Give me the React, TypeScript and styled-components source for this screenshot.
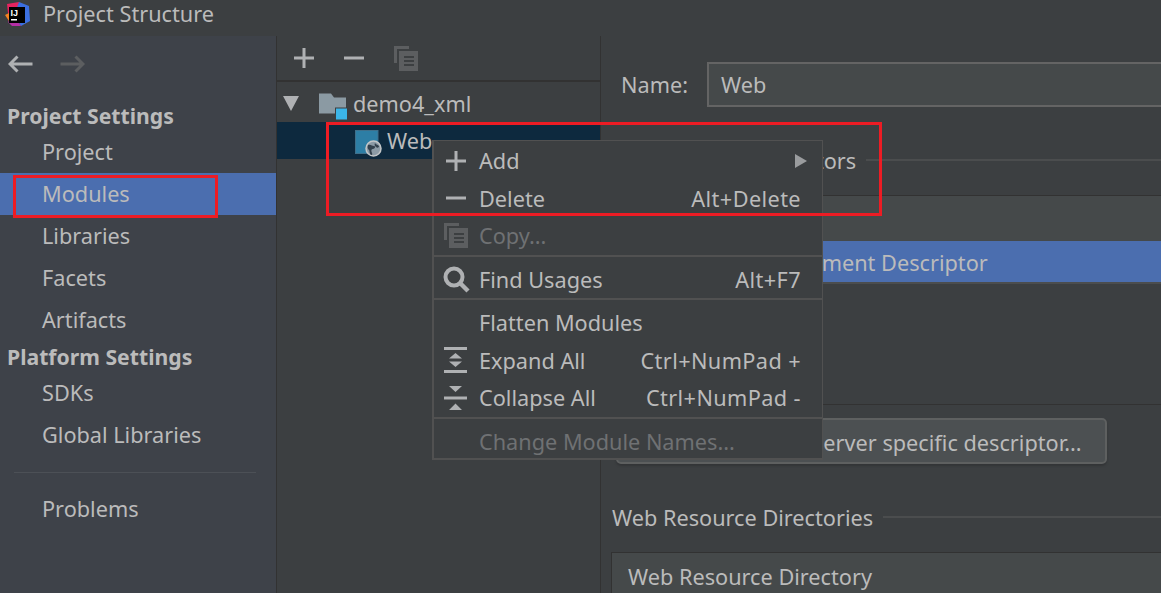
import React from 'react';
import styled, { createGlobalStyle } from 'styled-components';

const GlobalStyle = createGlobalStyle`
  html, body {
    margin: 0;
    padding: 0;
    background: #3c3f41;
    overflow: hidden;
  }
`;

const Root = styled.div`
  position: relative;
  width: 1161px;
  height: 593px;
  overflow: hidden;
  display: flex;
  flex-direction: column;
  background: #3c3f41;
  color: #bbbbbb;
  font-family: 'Noto Sans', 'Open Sans', sans-serif;
  font-size: 21.7px;
`;

const TitleBar = styled.div`
  height: 36px;
  flex: none;
  box-sizing: border-box;
  display: flex;
  align-items: center;
  gap: 13px;
  padding: 0 0 9px 5px;
  background: #3c3f41;
`;

const Body = styled.div`
  flex: 1;
  display: flex;
  min-height: 0;
`;

const Sidebar = styled.div`
  width: 276px;
  flex: none;
  background: #3e4249;
  border-right: 1px solid #323232;
  display: flex;
  flex-direction: column;
`;

const NavBar = styled.div`
  height: 59px;
  flex: none;
  box-sizing: border-box;
  display: flex;
  align-items: center;
  gap: 27px;
  padding: 0 0 3px 8px;
`;

const SideHeading = styled.div<{ $height: number; $pad?: number }>`
  height: ${p => p.$height}px;
  flex: none;
  box-sizing: border-box;
  display: flex;
  align-items: center;
  padding: ${p => p.$pad ?? 0}px 0 0 7px;
  font-size: 21.2px;
  font-weight: 700;
`;

const SideItem = styled.div<{ $selected?: boolean }>`
  height: 42px;
  flex: none;
  line-height: 42px;
  padding-left: 42px;
  background: ${p => (p.$selected ? '#4b6eaf' : 'transparent')};
`;

const SideRule = styled.div`
  height: 1px;
  flex: none;
  margin: 16px 20px 15px 14px;
  background: #4c5056;
`;

const Middle = styled.div`
  width: 323px;
  flex: none;
  border-right: 1px solid #323232;
  display: flex;
  flex-direction: column;
`;

const ToolBar = styled.div`
  height: 46px;
  flex: none;
  box-sizing: border-box;
  border-bottom: 2px solid #323232;
  display: flex;
  align-items: center;
  gap: 30px;
  padding-left: 17px;
`;

const TreeRow = styled.div<{ $selected?: boolean; $indent: number }>`
  height: 37px;
  flex: none;
  display: flex;
  align-items: center;
  padding-left: ${p => p.$indent}px;
  background: ${p => (p.$selected ? '#0d293e' : 'transparent')};
`;

const TreeRoot = styled(TreeRow)`
  margin-top: 3px;
`;

const TreeLabel = styled.span`
  margin-left: 4px;
`;

const WebIconSlot = styled.span`
  display: flex;
  margin-top: 6px;
`;

const Details = styled.div`
  flex: 1;
  min-width: 0;
  display: flex;
  flex-direction: column;
`;

const NameRow = styled.div`
  height: 45px;
  margin-top: 26px;
  flex: none;
  display: flex;
  align-items: center;
  gap: 19px;
  padding-left: 20px;
`;

const NameInput = styled.div`
  flex: 1;
  height: 45px;
  box-sizing: border-box;
  margin-right: -4px;
  padding-left: 12px;
  line-height: 41px;
  background: #45494a;
  border: 2px solid #646464;
`;

const SectionTitle = styled.div<{ $top: number; $left: number }>`
  display: flex;
  align-items: center;
  gap: 10px;
  margin: ${p => p.$top}px 0 0 ${p => p.$left}px;
  height: 30px;
  flex: none;
  white-space: nowrap;
`;

const SectionRule = styled.div`
  flex: 1;
  height: 2px;
  background: #4b4d4e;
`;

const TableHead = styled.div<{ $top: number; $line: number }>`
  height: 46px;
  flex: none;
  box-sizing: border-box;
  margin: ${p => p.$top}px -1px 0 10px;
  padding-left: 16px;
  line-height: ${p => p.$line}px;
  background: #45494a;
  border-top: 1px solid #323232;
  border-left: 1px solid #323232;
`;

const TableRow = styled.div`
  height: 41px;
  flex: none;
  line-height: 44px;
  margin: 0 0 0 10px;
  padding-left: 6px;
  background: #4b6eaf;
`;

const TableBottom = styled.div`
  height: 120px;
  flex: none;
  margin-left: 10px;
  border-top: 2px solid #4b4d4e;
  border-bottom: 1px solid #323232;
`;

const WideButton = styled.div`
  width: 491px;
  height: 46px;
  flex: none;
  box-sizing: border-box;
  margin: 13px 0 0 15px;
  padding-left: 4px;
  text-align: center;
  line-height: 46px;
  white-space: nowrap;
  background: #4c5052;
  border: 2px solid #5e6060;
  border-radius: 5px;
  box-shadow: 0 2px 2px #333537;
`;

const Menu = styled.div`
  position: absolute;
  left: 432px;
  top: 140px;
  width: 391px;
  height: 320px;
  box-sizing: border-box;
  padding-top: 1px;
  background: #3c3f41;
  border: 2px solid #515151;
  border-width: 1px 1px 2px 2px;
`;

const MenuRow = styled.div<{ $disabled?: boolean }>`
  height: 37.5px;
  display: grid;
  grid-template-columns: 45px 1fr auto;
  align-items: center;
  padding-right: 21px;
  white-space: nowrap;
  color: ${p => (p.$disabled ? '#6f7173' : '#bbbbbb')};
`;

const MenuIcon = styled.span`
  display: flex;
  align-items: center;
  justify-content: center;
  padding-right: 1px;
`;

const Shortcut = styled.span`
  letter-spacing: 0.4px;
`;

const MenuRule = styled.div<{ $gap: number }>`
  height: 2px;
  margin-bottom: ${p => p.$gap}px;
  background: #515151;
`;

const RedFrame = styled.div<{ $x: number; $y: number; $w: number; $h: number }>`
  position: absolute;
  left: ${p => p.$x}px;
  top: ${p => p.$y}px;
  width: ${p => p.$w}px;
  height: ${p => p.$h}px;
  box-sizing: border-box;
  border: 3px solid #ed1c24;
  pointer-events: none;
`;

const Logo = () => (
  <svg width="25" height="24" viewBox="0 0 25 24">
    <polygon points="2,2 14,0 12,14 4,20" fill="#e6235f" />
    <polygon points="14,0 24,4 25,19 16,24 9,14" fill="#3b6fe0" />
    <polygon points="0,13 6,10 8,21 4,19" fill="#f58320" />
    <polygon points="3,20 9,14 16,24 7,24" fill="#b62fa6" />
    <rect x="4" y="5" width="16" height="16" fill="#000" />
    <text x="5.5" y="13.5" fontFamily="'Liberation Sans', sans-serif" fontSize="9" fontWeight="700" fill="#fff">IJ</text>
    <rect x="6" y="17" width="6" height="1.5" fill="#fff" />
  </svg>
);

const Arrow = ({ color, flip }: { color: string; flip?: boolean }) => (
  <svg width="25" height="18" viewBox="0 0 25 18" style={flip ? { transform: 'scaleX(-1)' } : undefined}>
    <path d="M24.5 9H2M9.5 1.5 2 9l7.5 7.5" fill="none" stroke={color} strokeWidth="3" />
  </svg>
);

const Plus = ({ size = 20 }: { size?: number }) => (
  <svg width={size} height={size} viewBox="0 0 20 20">
    <path d="M0 8.5h20v3H0zM8.5 0h3v20h-3z" fill="#afb1b3" />
  </svg>
);

const Minus = ({ size = 20 }: { size?: number }) => (
  <svg width={size} height={size} viewBox="0 0 20 20">
    <path d="M0 8.5h20v3H0z" fill="#afb1b3" />
  </svg>
);

const CopyIcon = () => (
  <svg width="24" height="25" viewBox="0 0 24 25">
    <path d="M0 0h15v3H3v14H0z" fill="#5c5e60" />
    <path d="M5 5h19v20H5z" fill="#5c5e60" />
    <path d="M10 10h10v2H10zM10 14h10v2H10zM10 18h10v2H10z" fill="#3c3f41" />
  </svg>
);

const SearchIcon = () => (
  <svg width="27" height="27" viewBox="0 0 27 27">
    <circle cx="11" cy="11" r="8.5" fill="none" stroke="#afb1b3" strokeWidth="4" />
    <path d="M17 17l8 8" stroke="#afb1b3" strokeWidth="4.5" />
  </svg>
);

const ExpandIcon = () => (
  <svg width="24" height="26" viewBox="0 0 24 26">
    <path d="M0 0h23v3H0zM0 23h23v3H0z" fill="#afb1b3" />
    <path d="M11.5 6 18 11.5H5zM5 14.5h13L11.5 20z" fill="#afb1b3" />
  </svg>
);

const CollapseIcon = () => (
  <svg width="24" height="24" viewBox="0 0 24 24">
    <path d="M0 10.5h23v3H0z" fill="#afb1b3" />
    <path d="M5 0h13l-6.500 6zM11.500 17.500 18 24H5z" fill="#afb1b3" />
  </svg>
);

const Folder = () => (
  <svg width="30" height="32" viewBox="0 0 30 32">
    <path d="M0 5.500h12l3 4h12v16H0z" fill="#8b9aa3" />
    <rect x="16.500" y="20" width="12" height="12" fill="#3bb5e8" stroke="#3c3f41" strokeWidth="1" />
  </svg>
);

const WebIcon = () => (
  <svg width="28" height="27" viewBox="0 0 28 27">
    <rect x="0.500" y="0.500" width="22.500" height="23" fill="#2d7ea5" stroke="#3f6f8a" />
    <circle cx="18.500" cy="18.500" r="7.500" fill="#8c9ba6" stroke="#c3c6c8" strokeWidth="1.500" />
    <path d="M13 15c3-1 4 1 6 1s1 3-1 3-2 2-1 4-1 2-1 2c-2-2-1-4-2-5s-2-2-1-5zM20 13c1 2 2 1 4 3 0 2-2 2-3 1s-2-2-1-4z" fill="#33414d" />
  </svg>
);

const TreeArrow = styled.div`
  width: 0;
  height: 0;
  margin-right: 20px;
  border-left: 8px solid transparent;
  border-right: 8px solid transparent;
  border-top: 15px solid #afb1b3;
`;

const SubmenuArrow = styled.div`
  width: 0;
  height: 0;
  margin-right: -6px;
  border-top: 7.500px solid transparent;
  border-bottom: 7.500px solid transparent;
  border-left: 12px solid #9a9c9e;
`;

export default function App() {
  return (
    <Root>
      <GlobalStyle />
      <TitleBar>
        <Logo />
        <span>Project Structure</span>
      </TitleBar>
      <Body>
        <Sidebar>
          <NavBar>
            <Arrow color="#afb1b3" />
            <Arrow color="#5c5e60" flip />
          </NavBar>
          <SideHeading $height={36} $pad={4}>Project Settings</SideHeading>
          <SideItem>Project</SideItem>
          <SideItem $selected>Modules</SideItem>
          <SideItem>Libraries</SideItem>
          <SideItem>Facets</SideItem>
          <SideItem>Artifacts</SideItem>
          <SideHeading $height={31}>Platform Settings</SideHeading>
          <SideItem>SDKs</SideItem>
          <SideItem>Global Libraries</SideItem>
          <SideRule />
          <SideItem>Problems</SideItem>
        </Sidebar>
        <Middle>
          <ToolBar>
            <Plus />
            <Minus />
            <CopyIcon />
          </ToolBar>
          <TreeRoot $indent={6}>
            <TreeArrow />
            <Folder />
            <TreeLabel>demo4_xml</TreeLabel>
          </TreeRoot>
          <TreeRow $selected $indent={78}>
            <WebIconSlot><WebIcon /></WebIconSlot>
            <TreeLabel>Web</TreeLabel>
          </TreeRow>
        </Middle>
        <Details>
          <NameRow>
            <span>Name:</span>
            <NameInput>Web</NameInput>
          </NameRow>
          <SectionTitle $top={38} $left={8}>
            Deployment Descriptors
            <SectionRule />
          </SectionTitle>
          <TableHead $top={20} $line={44}>Type</TableHead>
          <TableRow>Web Module Deployment Descriptor</TableRow>
          <TableBottom />
          <WideButton>Add Application Server specific descriptor...</WideButton>
          <SectionTitle $top={38} $left={11}>
            Web Resource Directories
            <SectionRule />
          </SectionTitle>
          <TableHead $top={20} $line={48}>Web Resource Directory</TableHead>
        </Details>
      </Body>
      <Menu>
        <MenuRow>
          <MenuIcon><Plus /></MenuIcon>
          <span>Add</span>
          <SubmenuArrow />
        </MenuRow>
        <MenuRow>
          <MenuIcon><Minus /></MenuIcon>
          <span>Delete</span>
          <Shortcut>Alt+Delete</Shortcut>
        </MenuRow>
        <MenuRow $disabled>
          <MenuIcon><CopyIcon /></MenuIcon>
          <span>Copy...</span>
        </MenuRow>
        <MenuRule $gap={4} />
        <MenuRow>
          <MenuIcon><SearchIcon /></MenuIcon>
          <span>Find Usages</span>
          <Shortcut>Alt+F7</Shortcut>
        </MenuRow>
        <MenuRule $gap={4} />
        <MenuRow>
          <span />
          <span>Flatten Modules</span>
        </MenuRow>
        <MenuRow>
          <MenuIcon><ExpandIcon /></MenuIcon>
          <span>Expand All</span>
          <Shortcut>Ctrl+NumPad +</Shortcut>
        </MenuRow>
        <MenuRow>
          <MenuIcon><CollapseIcon /></MenuIcon>
          <span>Collapse All</span>
          <Shortcut>Ctrl+NumPad -</Shortcut>
        </MenuRow>
        <MenuRule $gap={4} />
        <MenuRow $disabled>
          <span />
          <span>Change Module Names...</span>
        </MenuRow>
      </Menu>
      <RedFrame $x={13} $y={175} $w={205} $h={43} />
      <RedFrame $x={326} $y={122} $w={556} $h={94} />
    </Root>
  );
}
